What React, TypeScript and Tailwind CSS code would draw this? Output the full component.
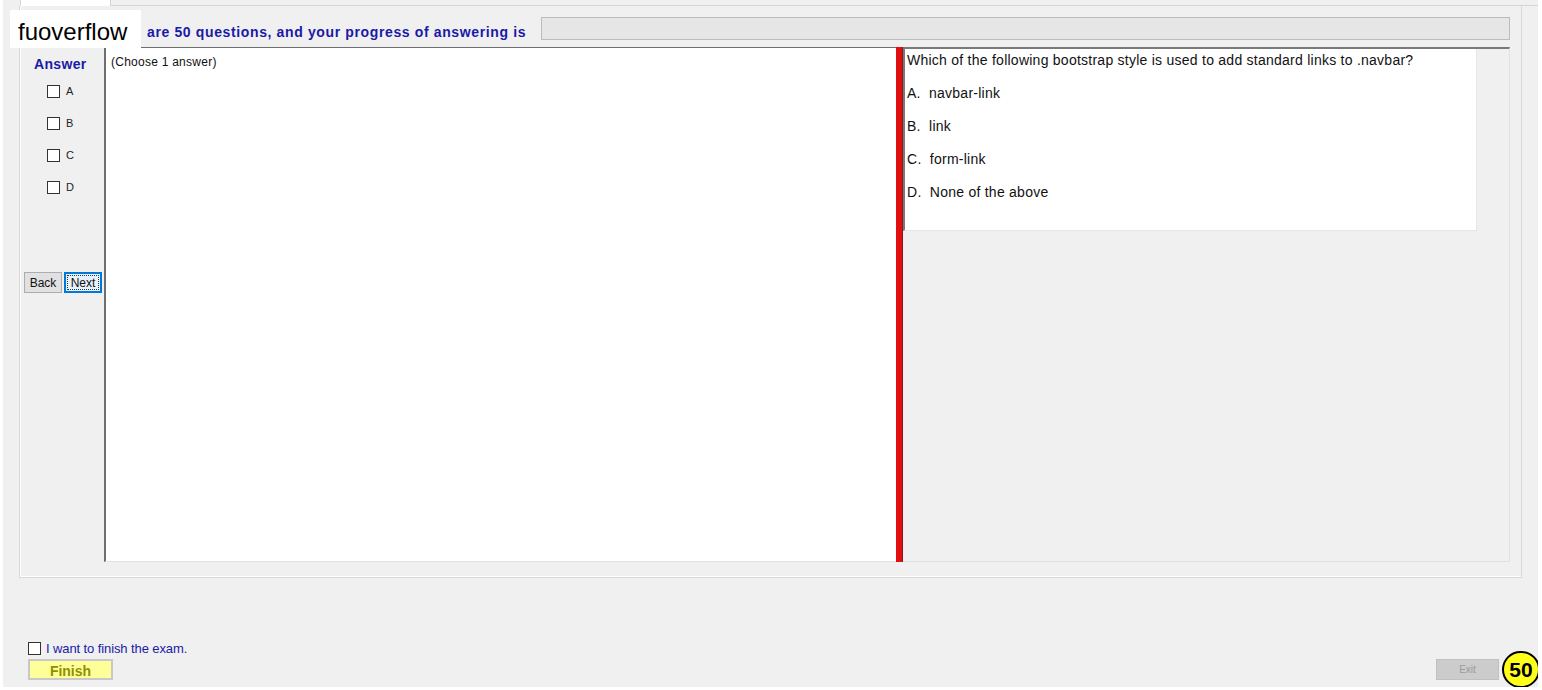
import { useState } from "react";

const OPTIONS = ["A", "B", "C", "D"] as const;

const QUESTION = {
  text: "Which of the following bootstrap style is used to add standard links to .navbar?",
  answers: [
    { key: "A", label: "navbar-link" },
    { key: "B", label: "link" },
    { key: "C", label: "form-link" },
    { key: "D", label: "None of the above" },
  ],
};

function Box({ checked, onClick }: { checked: boolean; onClick: () => void }) {
  return (
    <button
      onClick={onClick}
      className="w-[13px] h-[13px] border border-[#333] bg-white flex items-center justify-center text-[10px] leading-none"
    >
      {checked ? "✓" : ""}
    </button>
  );
}

export default function App() {
  const [picked, setPicked] = useState<string[]>([]);
  const [finish, setFinish] = useState(false);

  function toggle(k: string) {
    setPicked((prev) => (prev.includes(k) ? prev.filter((p) => p !== k) : [...prev, k]));
  }

  return (
    <div className="relative w-[1542px] h-[690px] bg-[#f0f0f0] flex flex-col font-['Liberation_Sans',Arial,sans-serif] border-l-[3px] border-r-[4px] border-b-[3px] border-white overflow-hidden">
      {/* tab strip */}
      <div className="h-[6px] flex shrink-0">
        <div className="ml-[17px] w-[91px] bg-white border-x border-[#d5d5d5]" />
        <div className="flex-1 border-b border-[#d5d5d5]" />
      </div>

      {/* group box */}
      <div className="ml-[16px] mr-[16px] h-[572px] border-x border-b border-[#d8d8d8] shadow-[inset_1px_0_0_#fff,inset_0_-1px_0_#fff] flex flex-col pt-[11px] shrink-0">
        {/* header (start of the sentence sits under the watermark) */}
        <div className="flex items-start h-[23px]">
          <span className="ml-[127px] mt-[7px] text-[14px] leading-[16px] font-bold tracking-[0.63px] text-[#1a1aa6] whitespace-nowrap">
            are 50 questions, and your progress of answering is
          </span>
          <div className="ml-[15px] mr-[11px] flex-1 h-[23px] bg-[#e6e6e6] border border-[#bcbcbc]" />
        </div>

        {/* content */}
        <div className="flex mt-[7px] h-[515px] mr-[11px]">
          {/* answer column */}
          <div className="w-[84px] flex flex-col">
            <div className="mt-[7px] ml-[14px] text-[14px] font-bold tracking-[0.35px] text-[#1a1aa6]">Answer</div>
            <div className="flex flex-col gap-[19px] mt-[10px] ml-[27px]">
              {OPTIONS.map((o) => (
                <div key={o} className="flex items-center gap-[6px] h-[13px]">
                  <Box checked={picked.includes(o)} onClick={() => toggle(o)} />
                  <span className="text-[11px] text-[#222]">{o}</span>
                </div>
              ))}
            </div>
            <div className="flex gap-[2px] mt-[78px] ml-[4px]">
              <button className="w-[38px] h-[21px] bg-[#e1e1e1] border border-[#adadad] text-[12px] text-[#111]">
                Back
              </button>
              <button className="w-[38px] h-[21px] bg-[#e5f1fb] border-2 border-[#0078d7] text-[12px] text-[#111] outline-1 outline-dotted outline-[#333] -outline-offset-4">
                Next
              </button>
            </div>
          </div>

          {/* explanation panel */}
          <div className="w-[792px] bg-white border-l-2 border-t border-[#6e6e6e] border-b border-b-[#e3e3e3] pl-[5px] pt-[1px]">
            <span className="text-[12px] tracking-[0.25px] text-[#111]">(Choose 1 answer)</span>
          </div>

          {/* splitter */}
          <div className="w-[7px] bg-[#e01010] border-r border-[#8a1a1a]" />

          {/* question panel */}
          <div className="flex-1 border-t-2 border-[#7a7a7a] border-r border-r-[#e0e0e0] border-b border-b-[#e0e0e0]">
            <div className="w-[574px] h-[182px] bg-white border-l-2 border-[#7a7a7a] border-b border-b-[#e6e6e6] border-r border-r-[#e6e6e6] pl-[2px] pt-[1px] text-[14px] tracking-[0.25px] text-[#111]">
              <div>{QUESTION.text}</div>
              <div className="flex flex-col gap-[16px] mt-[12px]">
                {QUESTION.answers.map((a) => (
                  <div key={a.key} className="h-[17px]">
                    {a.key}.&nbsp; {a.label}
                  </div>
                ))}
              </div>
            </div>
          </div>
        </div>
      </div>

      {/* footer */}
      <div className="flex flex-col ml-[25px] mt-[61px]">
        <div className="flex items-center gap-[5px]">
          <Box checked={finish} onClick={() => setFinish(!finish)} />
          <span className="text-[13px] tracking-[-0.1px] text-[#1a1aa6]">I want to finish the exam.</span>
        </div>
        <div className="flex items-end mt-[0px] mr-[39px]">
          <button className="w-[85px] h-[21px] bg-[#ffff99] border-2 border-[#c8c8c8] text-[14px] font-bold text-[#8f8f00]">
            Finish
          </button>
          <div className="flex-1" />
          <button className="w-[63px] h-[21px] bg-[#cccccc] border border-[#c0c0c0] text-[10px] text-[#9a9a9a]">
            Exit
          </button>
        </div>
      </div>

      {/* overlays */}
      <div className="absolute left-[7px] top-[10px] w-[131px] h-[38px] bg-white flex items-center pl-[8px] pt-[5px] text-[24px] text-black">
        fuoverflow
      </div>
      <div className="absolute right-[-2px] bottom-[-1px] w-[38px] h-[37px] rounded-full bg-[#ffff1a] border-2 border-black flex items-center justify-center text-[21px] font-bold text-black">
        50
      </div>
    </div>
  );
}
